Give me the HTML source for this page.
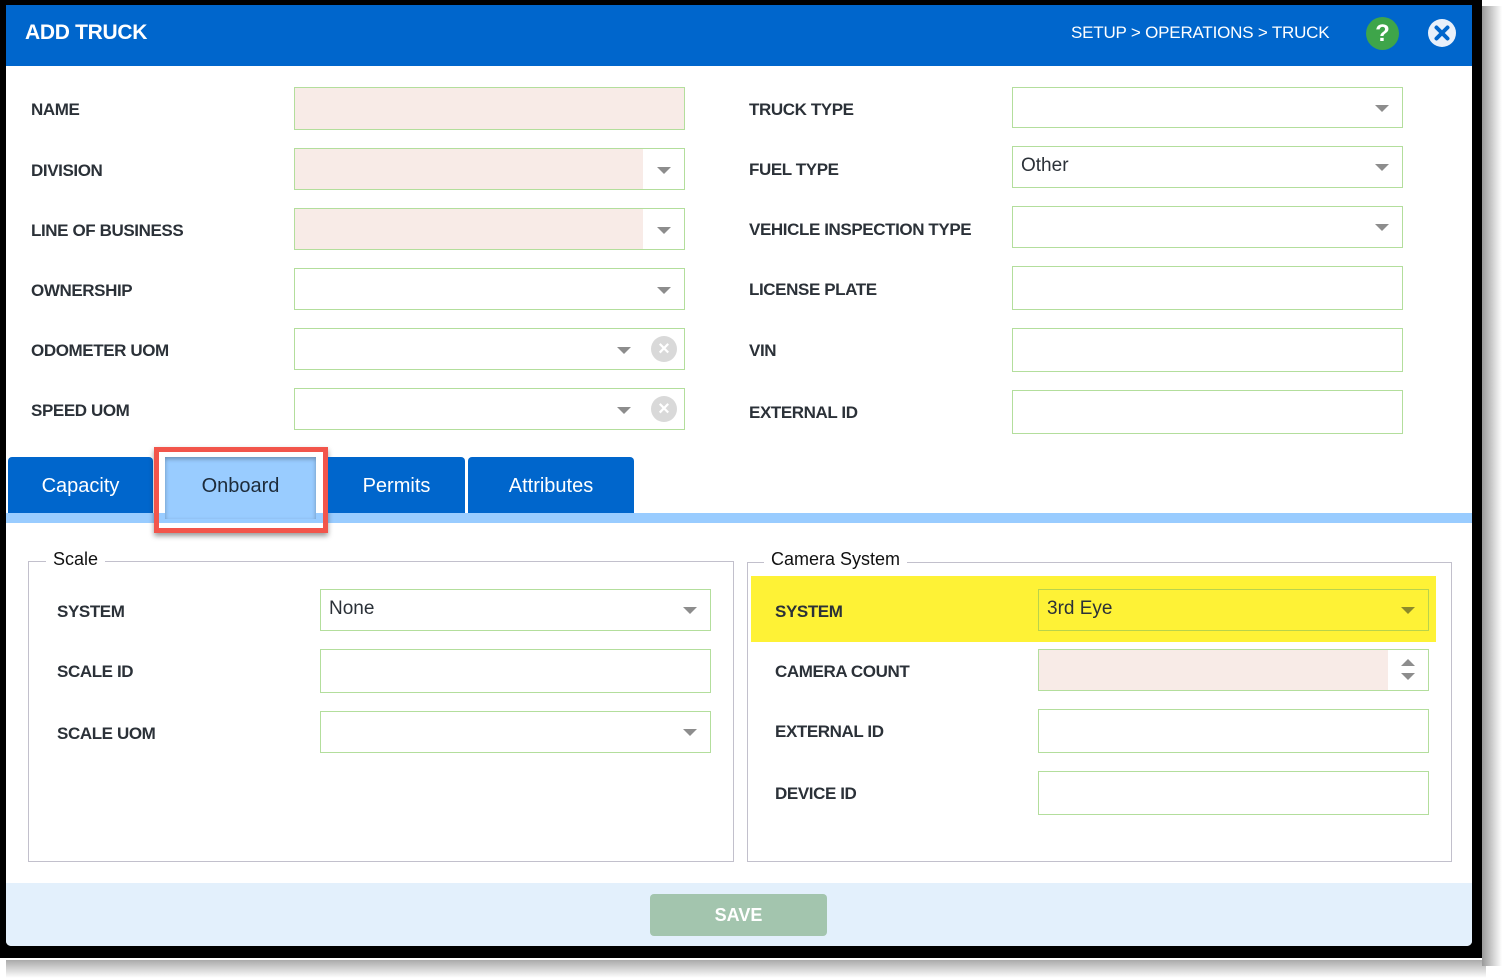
<!DOCTYPE html>
<html><head><meta charset="utf-8"><style>
*{box-sizing:border-box;margin:0;padding:0}
body{width:1502px;height:978px;background:#fff;position:relative;overflow:hidden;font-family:"Liberation Sans",sans-serif}
.a{position:absolute}
.lbl{position:absolute;font-weight:bold;font-size:17px;color:#2b3138;letter-spacing:-0.4px;line-height:20px}
.f{position:absolute;border:1px solid #b3de9c;background:#fff}
.pink{background:#f8ebe7}
.arr{position:absolute;width:0;height:0;border-left:7px solid transparent;border-right:7px solid transparent;border-top:7px solid #8d8d8d}
.val{position:absolute;left:8px;top:8px;font-size:19px;color:#2b3138}
.clr{position:absolute;width:26px;height:26px;border-radius:50%;background:#d9d9d9;color:#fff;font-size:20px;line-height:26px;text-align:center;font-weight:bold}
.tab{position:absolute;top:457px;height:56px;background:#0066cc;color:#fff;font-size:20px;text-align:center;line-height:58px;border-radius:4px 4px 0 0}
</style></head><body>
<!-- frame -->
<div class="a" style="left:0;top:0;width:1502px;height:978px;background:#fff"></div>
<div class="a" style="left:6px;top:960px;width:1480px;height:18px;background:linear-gradient(#aaa,#fff)"></div>
<div class="a" style="left:1482px;top:6px;width:20px;height:960px;background:linear-gradient(90deg,#999,#fff)"></div>
<div class="a" style="left:0;top:0;width:1482px;height:958px;background:#000"></div>
<div class="a" style="left:6px;top:5px;width:1466px;height:941px;background:#fff;border-radius:0 0 5px 5px;overflow:hidden">
</div>
<!-- header -->
<div class="a" style="left:6px;top:5px;width:1466px;height:61px;background:#0066cc"></div>
<div class="a" style="left:25px;top:21px;color:#fff;font-weight:bold;font-size:21px;letter-spacing:-0.3px">ADD TRUCK</div>
<div class="a" style="left:1071px;top:23px;color:#fff;font-size:17px;letter-spacing:-0.2px;width:262px;white-space:nowrap">SETUP &gt; OPERATIONS &gt; TRUCK</div>
<div class="a" style="left:1366px;top:17px;width:33px;height:33px;border-radius:50%;background:#3ea54a;color:#fff;font-weight:bold;font-size:24px;text-align:center;line-height:33px">?</div>
<svg class="a" style="left:1427px;top:18px" width="30" height="30" viewBox="0 0 30 30"><circle cx="15" cy="15" r="14" fill="#e8f0fa"/><path d="M9.5 9.5L20.5 20.5M20.5 9.5L9.5 20.5" stroke="#0066cc" stroke-width="4" stroke-linecap="round"/></svg>

<!-- left column -->
<div class="lbl" style="left:31px;top:100px">NAME</div>
<div class="f pink" style="left:294px;top:87px;width:391px;height:43px"></div>
<div class="lbl" style="left:31px;top:161px">DIVISION</div>
<div class="f pink" style="left:294px;top:148px;width:391px;height:42px"><div class="a" style="right:0;top:0;width:41px;height:40px;background:#fff"></div><div class="arr" style="left:362px;top:18px"></div></div>
<div class="lbl" style="left:31px;top:221px">LINE OF BUSINESS</div>
<div class="f pink" style="left:294px;top:208px;width:391px;height:42px"><div class="a" style="right:0;top:0;width:41px;height:40px;background:#fff"></div><div class="arr" style="left:362px;top:18px"></div></div>
<div class="lbl" style="left:31px;top:281px">OWNERSHIP</div>
<div class="f" style="left:294px;top:268px;width:391px;height:42px"><div class="arr" style="left:362px;top:18px"></div></div>
<div class="lbl" style="left:31px;top:341px">ODOMETER UOM</div>
<div class="f" style="left:294px;top:328px;width:391px;height:42px"><div class="arr" style="left:322px;top:18px"></div><div class="clr" style="left:356px;top:7px">×</div></div>
<div class="lbl" style="left:31px;top:401px">SPEED UOM</div>
<div class="f" style="left:294px;top:388px;width:391px;height:42px"><div class="arr" style="left:322px;top:18px"></div><div class="clr" style="left:356px;top:7px">×</div></div>

<!-- right column -->
<div class="lbl" style="left:749px;top:100px">TRUCK TYPE</div>
<div class="f" style="left:1012px;top:87px;width:391px;height:41px"><div class="arr" style="left:362px;top:17px"></div></div>
<div class="lbl" style="left:749px;top:160px">FUEL TYPE</div>
<div class="f" style="left:1012px;top:146px;width:391px;height:42px"><div class="val">Other</div><div class="arr" style="left:362px;top:17px"></div></div>
<div class="lbl" style="left:749px;top:220px">VEHICLE INSPECTION TYPE</div>
<div class="f" style="left:1012px;top:206px;width:391px;height:42px"><div class="arr" style="left:362px;top:17px"></div></div>
<div class="lbl" style="left:749px;top:280px">LICENSE PLATE</div>
<div class="f" style="left:1012px;top:266px;width:391px;height:44px"></div>
<div class="lbl" style="left:749px;top:341px">VIN</div>
<div class="f" style="left:1012px;top:328px;width:391px;height:44px"></div>
<div class="lbl" style="left:749px;top:403px">EXTERNAL ID</div>
<div class="f" style="left:1012px;top:390px;width:391px;height:44px"></div>

<!-- tabs -->
<div class="a" style="left:6px;top:513px;width:1466px;height:10px;background:#99ccff"></div>
<div class="tab" style="left:8px;width:145px">Capacity</div>
<div class="a" style="left:154px;top:447px;width:174px;height:86px;border:5px solid #f2554b;box-shadow:0 3px 5px rgba(0,0,0,0.4)"></div>
<div class="tab" style="left:165px;width:151px;background:#99ccff;color:#1d2b3a;height:62px;border-radius:0;box-shadow:inset 0 2px 4px rgba(0,0,0,0.3)">Onboard</div>
<div class="tab" style="left:328px;width:137px;border-radius:0 4px 0 0">Permits</div>
<div class="tab" style="left:468px;width:166px">Attributes</div>

<!-- Scale fieldset -->
<div class="a" style="left:28px;top:561px;width:706px;height:301px;border:1px solid #c2c0cc"></div>
<div class="a" style="left:46px;top:549px;background:#fff;padding:0 7px;font-size:18px;color:#111">Scale</div>
<div class="lbl" style="left:57px;top:602px">SYSTEM</div>
<div class="f" style="left:320px;top:589px;width:391px;height:42px"><div class="val" style="top:8px">None</div><div class="arr" style="left:362px;top:17px"></div></div>
<div class="lbl" style="left:57px;top:662px">SCALE ID</div>
<div class="f" style="left:320px;top:649px;width:391px;height:44px"></div>
<div class="lbl" style="left:57px;top:724px">SCALE UOM</div>
<div class="f" style="left:320px;top:711px;width:391px;height:42px"><div class="arr" style="left:362px;top:17px"></div></div>

<!-- Camera fieldset -->
<div class="a" style="left:747px;top:562px;width:705px;height:300px;border:1px solid #c2c0cc"></div>
<div class="a" style="left:764px;top:549px;background:#fff;padding:0 7px;font-size:18px;color:#111">Camera System</div>
<div class="a" style="left:751px;top:576px;width:685px;height:66px;background:#fef236"></div>
<div class="lbl" style="left:775px;top:602px">SYSTEM</div>
<div class="f" style="left:1038px;top:589px;width:391px;height:42px;background:#fef236;border-color:#b9d34a"><div class="val" style="top:8px">3rd Eye</div><div class="arr" style="left:362px;top:17px;border-top-color:#8c8a2a"></div></div>
<div class="lbl" style="left:775px;top:662px">CAMERA COUNT</div>
<div class="f pink" style="left:1038px;top:649px;width:391px;height:42px"><div class="a" style="right:0;top:0;width:40px;height:40px;background:#fff"></div>
<div class="a" style="left:362px;top:9px;width:0;height:0;border-left:7px solid transparent;border-right:7px solid transparent;border-bottom:7px solid #8d8d8d"></div>
<div class="arr" style="left:362px;top:23px"></div></div>
<div class="lbl" style="left:775px;top:722px">EXTERNAL ID</div>
<div class="f" style="left:1038px;top:709px;width:391px;height:44px"></div>
<div class="lbl" style="left:775px;top:784px">DEVICE ID</div>
<div class="f" style="left:1038px;top:771px;width:391px;height:44px"></div>

<!-- footer -->
<div class="a" style="left:6px;top:883px;width:1466px;height:63px;background:#e3f0fc;border-radius:0 0 5px 5px"></div>
<div class="a" style="left:650px;top:894px;width:177px;height:42px;background:#a3c5ae;border-radius:4px;color:#fff;font-weight:bold;font-size:18px;text-align:center;line-height:42px">SAVE</div>
</body></html>
